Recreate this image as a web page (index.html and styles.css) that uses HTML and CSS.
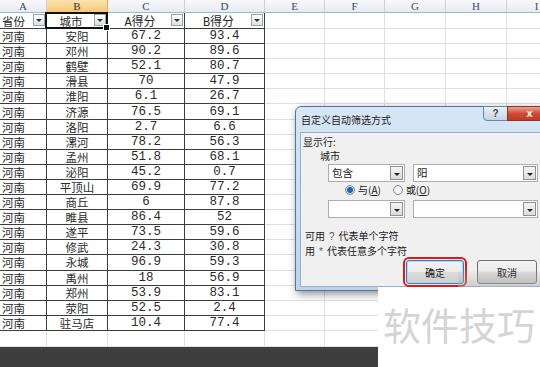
FILE: index.html
```html
<!DOCTYPE html>
<html>
<head>
  <title>自定义自动筛选方式</title>
  <meta charset="UTF-8" />
  <link rel="stylesheet" href="styles.css">
</head>
<body>
  <div class="sheet" id="sheet"></div>
  <div class="bar"></div>

  <div class="dlg">
    <div class="dlg-title">自定义自动筛选方式</div>
    <div class="qb">?</div>
    <div class="xb">x</div>
    <div class="dlg-body">
      <div class="lbl">显示行:</div>
      <div class="field">城市</div>
      <div class="crow">
        <div class="combo c1"><span class="cb-text">包含</span><span class="cb-btn"></span></div>
        <div class="combo c2"><span class="cb-text">阳</span><span class="cb-btn"></span></div>
      </div>
      <div class="radios">
        <span class="rd on"></span><span class="rt">与(<u>A</u>)</span>
        <span class="rd"></span><span class="rt">或(<u>O</u>)</span>
      </div>
      <div class="crow r2">
        <div class="combo c1"><span class="cb-text"></span><span class="cb-btn"></span></div>
        <div class="combo c2"><span class="cb-text"></span><span class="cb-btn"></span></div>
      </div>
      <div class="hints">
        <div>可用<span class="wc">?</span>代表单个字符</div>
        <div>用<span class="wc">*</span>代表任意多个字符</div>
      </div>
      <div class="btns">
        <button class="btn ok">确定</button>
        <button class="btn">取消</button>
      </div>
    </div>
  </div>

  <div class="wm">软件技巧</div>

  <script>
    const data = [
      ['安阳','67.2','93.4'], ['邓州','90.2','89.6'], ['鹤壁','52.1','80.7'], ['滑县','70','47.9'],
      ['淮阳','6.1','26.7'], ['济源','76.5','69.1'], ['洛阳','2.7','6.6'], ['漯河','78.2','56.3'],
      ['孟州','51.8','68.1'], ['泌阳','45.2','0.7'], ['平顶山','69.9','77.2'], ['商丘','6','87.8'],
      ['睢县','86.4','52'], ['遂平','73.5','59.6'], ['修武','24.3','30.8'], ['永城','96.9','59.3'],
      ['禹州','18','56.9'], ['郑州','53.9','83.1'], ['荥阳','52.5','2.4'], ['驻马店','10.4','77.4']
    ];
    const cols = ['A','B','C','D','E','F','G','H','I'];
    const blank = n => '<div class="c"></div>'.repeat(n);
    let html = cols.map(c => `<div class="col${c === 'B' ? ' sel' : ''}">${c}</div>`).join('');

    html += `<div class="c t l">省份<span class="fb"></span></div>`
      + `<div class="c t h hsel">城市<span class="fb"></span></div>`
      + `<div class="c t h num">A得分<span class="fb"></span></div>`
      + `<div class="c t h num">B得分<span class="fb"></span></div>` + blank(5);

    data.forEach(r => {
      html += `<div class="c t l">河南</div><div class="c t">${r[0]}</div>`
        + `<div class="c t num">${r[1]}</div><div class="c t num">${r[2]}</div>` + blank(5);
    });
    html += blank(9);
    document.getElementById('sheet').innerHTML = html;
  </script>
</body>
</html>
```

FILE: styles.css
```css
* {
  box-sizing: border-box;
}
body {
  margin: 0;
  width: 540px;
  height: 367px;
  overflow: hidden;
  position: relative;
  background: #fff;
  color: #222;
  font-family: "Noto Sans CJK SC", sans-serif;
}
.sheet {
  display: grid;
  width: 567px;
  grid-template-columns: 47px 61px 77px 80px 60px 60px 61px 61px 60px;
  grid-template-rows: 13px 16px repeat(20, 15.1px) 16px;
}
.col {
  display: flex;
  align-items: center;
  justify-content: center;
  font-family: "Liberation Serif", serif;
  font-size: 11px;
  color: #3a4b63;
  background: linear-gradient(#f8f9fb, #e6ebf1);
  border-right: 1px solid #c9d1dc;
  border-bottom: 1px solid #9eb6ce;
}
.col.sel {
  background: linear-gradient(#fbe3b0, #f5c772);
  border-right-color: #e2ac55;
  border-bottom-color: #e2ac55;
  color: #333;
}
.c {
  position: relative;
  display: flex;
  align-items: center;
  justify-content: center;
  white-space: nowrap;
  font-size: 11.5px;
  color: #2a2a2a;
  border-right: 1px solid #dde1e7;
  border-bottom: 1px solid #dde1e7;
}
.c.t {
  border-right-color: #3c3c3c;
  border-bottom-color: #3c3c3c;
}
.c.l {
  justify-content: flex-start;
  padding-left: 2px;
}
.c.h {
  padding-right: 12px;
}
.num {
  font-family: "Liberation Mono", "Noto Sans CJK SC", monospace;
  font-size: 12.5px;
}
.c.h.num {
  font-size: 12px;
}
.fb {
  position: absolute;
  right: 1px;
  top: 1px;
  width: 12px;
  height: 12px;
  border: 1px solid #9ca3ad;
  background: linear-gradient(#ffffff, #dcdfe4);
}
.fb::after {
  content: "";
  position: absolute;
  left: 2px;
  top: 4px;
  border-left: 3px solid transparent;
  border-right: 3px solid transparent;
  border-top: 3px solid #333;
}
.hsel {
  z-index: 2;
}
.hsel::after {
  content: "";
  position: absolute;
  left: -2px;
  top: -1px;
  right: -1px;
  bottom: -1px;
  border: 2px solid #111;
}
.hsel::before {
  content: "";
  position: absolute;
  right: -3px;
  bottom: -3px;
  width: 5px;
  height: 5px;
  background: #111;
  border: 1px solid #fff;
  z-index: 3;
}
.bar {
  height: 20px;
  background: #3e3e3e;
}

/* dialog */
.dlg {
  position: absolute;
  left: 295px;
  top: 106px;
  width: 252px;
  height: 185px;
  display: flex;
  flex-direction: column;
  border: 1px solid #52739a;
  border-radius: 6px 6px 0 0;
  background: linear-gradient(#d7e6f5, #bed4ec);
  box-shadow: 2px 3px 8px rgba(0, 0, 0, 0.45);
  font-size: 10px;
  color: #1b1b1b;
}
.dlg-title {
  height: 25px;
  padding: 6px 0 0 5px;
  line-height: 14px;
}
.qb, .xb {
  position: absolute;
  top: -1px;
  height: 15px;
  border: 1px solid #6b86a6;
  text-align: center;
  line-height: 13px;
}
.qb {
  left: 187px;
  width: 25px;
  border-radius: 0 0 0 4px;
  background: linear-gradient(#eaf1f8, #c4d5e8);
  color: #445;
  font-family: "Liberation Sans", sans-serif;
  font-weight: bold;
}
.xb {
  left: 211px;
  width: 45px;
  background: linear-gradient(#e9a597, #cf4d36 50%, #c13925);
  border-color: #8a3226;
  color: #fff;
  font-family: "Liberation Sans", sans-serif;
  font-weight: bold;
  font-size: 11px;
}
.dlg-body {
  flex: 1;
  margin: 0 4px 3px 4px;
  background: #f0f0f0;
  border: 1px solid #98afc9;
  line-height: 14px;
}
.lbl {
  margin-top: 2px;
  padding-left: 2px;
}
.field {
  padding-left: 19px;
}
.crow {
  display: flex;
  gap: 8px;
  margin: 1px 0 0 27px;
  height: 18px;
}
.crow.r2 {
  margin-top: 2px;
}
.combo {
  display: flex;
  align-items: stretch;
  border: 1px solid #abadb3;
  background: #fff;
  font-size: 10.5px;
}
.combo.c1 {
  width: 77px;
}
.combo.c2 {
  width: 125px;
}
.cb-text {
  flex: 1;
  padding-left: 3px;
  line-height: 16px;
}
.cb-btn {
  position: relative;
  width: 13px;
  margin: 1px;
  border: 1px solid #8e8f91;
  background: linear-gradient(#f5f5f5, #dadada);
}
.cb-btn::after {
  content: "";
  position: absolute;
  left: 3px;
  top: 6px;
  border-left: 3px solid transparent;
  border-right: 3px solid transparent;
  border-top: 3px solid #222;
}
.radios {
  display: flex;
  align-items: center;
  height: 16px;
  margin-left: 44px;
}
.rd {
  width: 10px;
  height: 10px;
  border-radius: 50%;
  border: 1px solid #8c8c8c;
  background: radial-gradient(circle, #fff, #e2e2e2);
  margin-right: 3px;
}
.rd.on {
  background: radial-gradient(circle, #1f67b5 0 2.5px, #bcd8f2 3.5px, #f4f9fd);
}
.rt {
  margin-right: 12px;
}
.rt u {
  text-underline-offset: 1px;
}
.hints {
  margin-top: 11px;
  padding-left: 4px;
  line-height: 14px;
}
.wc {
  margin: 0 4px;
  font-family: "Liberation Sans", sans-serif;
  color: #555;
}
.btns {
  display: flex;
  gap: 13px;
  margin: 1px 0 0 105px;
}
.btn {
  width: 58px;
  height: 24px;
  padding: 0;
  border: 1px solid #707070;
  border-radius: 3px;
  background: linear-gradient(#f3f3f3 0, #ebebeb 50%, #dddddd 50%, #cfcfcf);
  font-family: "Noto Sans CJK SC", sans-serif;
  font-size: 10px;
  color: #111;
}
.btn.ok {
  border-color: #3c7fb1;
  box-shadow: inset 0 0 0 1px #a8d8f5;
  outline: 2px solid #e0191c;
  outline-offset: 1px;
}
.btn + .btn {
  width: 60px;
}

/* watermark */
.wm {
  position: absolute;
  left: 378px;
  top: 287px;
  right: 0;
  bottom: 0;
  background: #fff;
  color: #d4d4d4;
  font-size: 38px;
  line-height: 1;
  padding: 18px 0 0 5px;
  white-space: nowrap;
}
.wm::before {
  content: "";
  position: absolute;
  left: 80px;
  right: 0;
  top: -16px;
  height: 16px;
  background: linear-gradient(rgba(190, 190, 190, 0.1), rgba(170, 170, 170, 0.5));
}
```
